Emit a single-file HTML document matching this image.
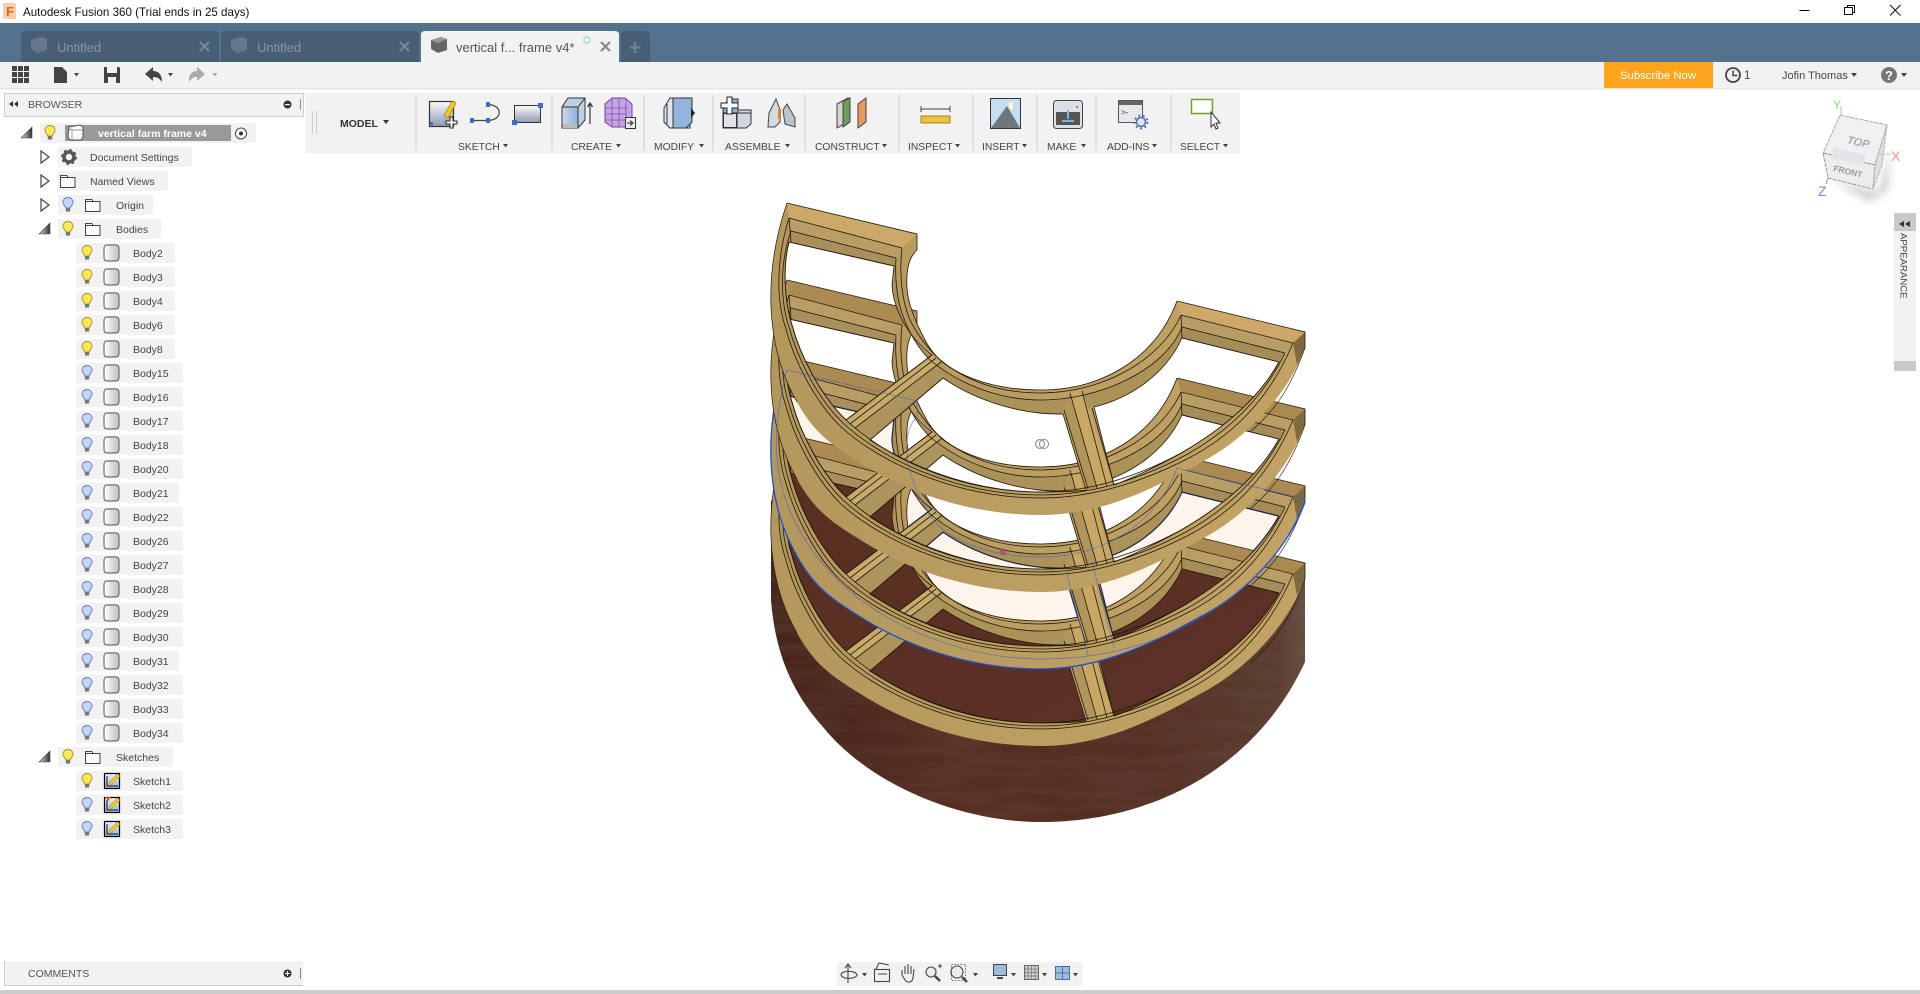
<!DOCTYPE html>
<html><head><meta charset="utf-8"><title>Autodesk Fusion 360</title>
<style>
html,body{margin:0;padding:0;width:1920px;height:994px;overflow:hidden;background:#fff}
svg{display:block;position:absolute;left:0;top:0}
text{font-family:"Liberation Sans",sans-serif;fill:#444;font-size:10.5px}
.tl{font-size:10.3px;fill:#444}
.t{font-size:10.5px;fill:#444}
.ln{fill:none;stroke:#20180a;stroke-width:.8}
</style></head><body>
<svg width="1920" height="994" viewBox="0 0 1920 994" xmlns="http://www.w3.org/2000/svg">
<defs>
<linearGradient id="wood" x1="0" x2="1" y1="0" y2="0"><stop offset="0" stop-color="#b4975c"/><stop offset=".5" stop-color="#bb9e62"/><stop offset="1" stop-color="#c2a364"/></linearGradient>
<linearGradient id="base" x1="0" x2="1" y1="0" y2="0"><stop offset="0" stop-color="#45251b"/><stop offset=".35" stop-color="#562d21"/><stop offset=".7" stop-color="#552e23"/><stop offset=".95" stop-color="#5b3e30"/><stop offset="1" stop-color="#6b5244"/></linearGradient>
<linearGradient id="brown" x1="0" x2="1" y1="0" y2="1"><stop offset="0" stop-color="#5a3023"/><stop offset="1" stop-color="#5a3124"/></linearGradient>
<linearGradient id="gs" x1="0" x2="0" y1="0" y2="1"><stop offset="0" stop-color="#fbfbfb"/><stop offset="1" stop-color="#8e9ab0"/></linearGradient>
<linearGradient id="gb" x1="0" x2="1" y1="0" y2="0"><stop offset="0" stop-color="#c9d9ea"/><stop offset="1" stop-color="#8fb0d6"/></linearGradient>
<linearGradient id="gi" x1="0" x2="1" y1="0" y2="0"><stop offset="0" stop-color="#fff"/><stop offset="1" stop-color="#bdbfc4"/></linearGradient>
<linearGradient id="gt" x1="0" x2="1" y1="0" y2="0"><stop offset="0" stop-color="#ddd"/><stop offset="1" stop-color="#333"/></linearGradient>
<linearGradient id="gsk" x1="0" x2="0" y1="0" y2="1"><stop offset="0" stop-color="#eaf2fa"/><stop offset="1" stop-color="#8fb8e2"/></linearGradient>
<filter id="bl"><feGaussianBlur stdDeviation="4"/></filter>
<filter id="grain" x="0" y="0" width="100%" height="100%"><feTurbulence type="fractalNoise" baseFrequency=".012 .09" numOctaves="3" seed="4"/><feColorMatrix values="0 0 0 0 .12  0 0 0 0 .06  0 0 0 0 .04  .9 0 0 0 -.28"/><feComposite in2="SourceGraphic" operator="in"/></filter>

<path id="wn" d="M789,242 L894,266 L892,285 C893,305 905,335 932,355 L846,420 C820,395 800,355 792,325 C784,300 783,265 789,242 Z M943,378 C975,400 1020,415 1063,414 L1086,490 C1070,492 1055,492 1041,492 C980,492 920,472 870,440 Z M1094,407 C1130,398 1165,375 1182,338 L1279,362 C1255,405 1215,433 1183,452 C1160,465 1135,477 1114,485 Z"/>
<path id="so" d="M1305,348 C1288,395 1245,440 1200,463 C1160,485 1105,515 1041,515 C975,515 910,495 859,462 C835,447 815,435 797,402 C764,345 764,270 787,203"/>
<path id="ia" d="M917,250 C908,258 906,272 907,288 C908,305 917,325 925,340 C928,345 930,350 941,361 C965,380 1000,390 1041,390 C1100,390 1155,360 1177,301"/>
<path id="ia2" d="M902,248 C900,265 900,290 907,312 C912,328 925,345 937,357 C965,382 1000,393 1041,393 C1100,393 1160,362 1181,315"/>
<path id="ia3" d="M896,258 C895,275 896,298 903,316 C910,335 920,350 930,360 C960,385 1000,400 1041,400 C1100,400 1165,370 1182,327"/>
<path id="si" d="M789,242 C783,265 784,300 792,325 C800,355 820,395 846,420 C880,452 950,492 1041,492 C1100,492 1150,470 1183,452 C1215,433 1255,405 1279,362"/>
<path id="si2" d="M791,231 C780,262 780,300 789,327 C797,357 817,398 843,423 C877,455 950,495 1041,495 C1100,495 1152,473 1186,455 C1220,436 1260,405 1285,353"/>
<path id="si3" d="M789,218 C776,260 776,300 786,329 C794,360 814,400 840,426 C874,458 950,498 1041,498 C1100,498 1154,476 1189,458 C1225,439 1266,407 1293,343"/>
<path id="ov" d="M787,203 L917,234 L917,250 C908,258 906,272 907,288 C908,305 917,325 925,340 C928,345 930,350 941,361 C965,380 1000,390 1041,390 C1100,390 1155,360 1177,301 L1305,332 C1285,390 1240,430 1190,457 C1150,478 1100,492 1041,492 C960,492 870,455 823,397 C775,340 766,280 787,203 Z"/>
<path id="rd" d="M787,203 L917,234 L902,248 L789,218 Z M1177,301 L1305,332 L1293,343 L1181,315 Z" fill="#6d5327" opacity=".35"/>

<g id="T">
<path fill="url(#wood)" fill-rule="evenodd" d="M787,203 L917,234 L917,250 C908,258 906,272 907,288 C908,305 917,325 925,340 C928,345 930,350 941,361 C965,380 1000,390 1041,390 C1100,390 1155,360 1177,301 L1305,332 L1305,348 C1288,395 1245,440 1200,463 C1160,485 1105,515 1041,515 C975,515 910,495 859,462 C835,447 815,435 797,402 C764,345 764,270 787,203 Z M789,242 L894,266 L892,285 C893,305 905,335 932,355 L846,420 C820,395 800,355 792,325 C784,300 783,265 789,242 Z M943,378 C975,400 1020,415 1063,414 L1086,490 C1070,492 1055,492 1041,492 C980,492 920,472 870,440 Z M1094,407 C1130,398 1165,375 1182,338 L1279,362 C1255,405 1215,433 1183,452 C1160,465 1135,477 1114,485 Z"/>
<path fill="#ab9259" d="M894,266 L892,285 C893,305 905,335 931,355 L943,378 C975,400 1020,415 1063,414 L1094,407 C1130,398 1165,375 1182,338 L1182,327 C1165,370 1100,400 1041,400 C1000,400 960,385 930,360 C920,350 910,335 903,316 C896,298 895,275 896,258 Z"/>
<path fill="#cca968" d="M787,203 L917,234 L902,248 L789,218 Z"/>
<path fill="#b89e65" d="M789,218 L902,248 L896,258 L791,231 Z"/>
<path fill="#a88f5b" d="M791,231 L896,258 L894,266 L789,242 Z"/>
<path fill="#cda868" d="M1177,301 L1305,332 L1293,343 L1181,315 Z"/>
<path fill="#b89e65" d="M1181,315 L1293,343 L1285,353 L1182,327 Z"/>
<path fill="#a58d5a" d="M1182,327 L1285,353 L1279,362 L1182,338 Z"/>
<path fill="#7f6a3f" d="M1305,332 L1305,348 L1297,365 L1293,343 Z"/>
<path fill="#c7ab6a" d="M932,355 L941,362 L855,428 L846,420 Z"/>
<path fill="#ad945c" d="M941,362 L943,378 L870,440 L855,428 Z"/>
<path fill="#c9a866" d="M1070,393 L1082,390 L1114,485 L1097,488 Z"/>
<path fill="#b0965d" d="M1064,410 L1070,393 L1097,488 L1088,489 Z"/>
<g class="ln">
<path d="M787,203 L917,234 L917,250 M1177,301 L1305,332 L1305,348"/>
<path d="M789,218 L902,248 M791,231 L896,258 M789,242 L894,266"/>
<path d="M1181,315 L1293,343 M1182,327 L1285,353 M1182,338 L1279,362"/>
<path d="M932,355 L846,420 M941,362 L855,428 M943,378 L870,440 M936,358 L850,424"/>
<path d="M1070,393 L1097,488 M1082,391 L1107,487 M1092,408 L1114,485 M1064,410 L1088,489"/>
<path d="M789,218 L791,242 M1181,315 L1182,338"/>
<use href="#wn"/>
<use href="#ia"/>
<use href="#ia2"/>
<use href="#ia3"/>
<use href="#si"/>
<use href="#si2"/>
<use href="#si3"/>
<path d="M787,203 C764,270 764,345 797,402" stroke-width=".7"/>
<path d="M1305,348 C1288,395 1270,415 1250,432" stroke-width=".6"/>
</g>
</g>

<g id="bY"><path d="M0,-7.5 C3.2,-7.5 5,-5.2 5,-2.8 C5,-.5 2.6,.8 2.3,3 L-2.3,3 C-2.6,.8 -5,-.5 -5,-2.8 C-5,-5.2 -3.2,-7.5 0,-7.5 Z" fill="#ffe94f" stroke="#a8983e"/><rect x="-2.2" y="3" width="4.4" height="3.6" rx="1" fill="#777"/></g>
<g id="bB"><path d="M0,-7.5 C3.2,-7.5 5,-5.2 5,-2.8 C5,-.5 2.6,.8 2.3,3 L-2.3,3 C-2.6,.8 -5,-.5 -5,-2.8 C-5,-5.2 -3.2,-7.5 0,-7.5 Z" fill="#c3d5f5" stroke="#6f86b4"/><rect x="-2.2" y="3" width="4.4" height="3.6" rx="1" fill="#777"/></g>
<path id="fd" d="M-7.5,-5.5 L-1,-5.5 L0,-3.5 L7,-3.5 L7,6.5 L-7.5,6.5 Z M-7.5,-3.5 L0,-3.5" fill="#fafafa" stroke="#444" stroke-width="1"/>
<path id="tO" d="M0,-6 L8,0 L0,6 Z" fill="#fff" stroke="#444" stroke-width="1.2"/>
<path id="tD" d="M11,-6 L0,5 L11,5 Z" fill="url(#gt)" stroke="#444" stroke-width=".6"/>
<g id="ri"><rect x="104" y="-8" width="15" height="16" rx="3" fill="url(#gi)" stroke="#555" stroke-width="1"/></g>
<g id="ry"><rect x="76" y="-10" width="99" height="20" fill="#f2f2f2"/><use href="#bY" x="87"/><use href="#ri"/></g>
<g id="rb"><rect x="76" y="-10" width="107" height="20" fill="#f2f2f2"/><use href="#bB" x="87"/><use href="#ri"/></g>
<g id="rc"><rect x="76" y="-10" width="103" height="20" fill="#f2f2f2"/><use href="#bB" x="87"/><use href="#ri"/></g>
<g id="sk"><rect x="104.500" y="-7.500" width="15" height="15" fill="url(#gsk)" stroke="#000" stroke-width="1.2"/><path d="M107,-5 V5 H118" fill="none" stroke="#111"/><path d="M109,2 L117,-7 L120,-5 L111,4 Z" fill="#f6c91c" stroke="#a57a10" stroke-width=".5"/></g>
</defs>

<!-- title bar -->
<rect width="1920" height="23" fill="#fff"/>
<rect x="3" y="3" width="13" height="16" rx="1" fill="#f7cfa8"/>
<text x="6" y="16" style="font-size:13px;font-weight:bold;fill:#d46a1e">F</text>
<text x="23" y="16" style="font-size:11.600px;fill:#111">Autodesk Fusion 360 (Trial ends in 25 days)</text>
<path d="M1799.500,10.500 H1809.500" stroke="#000" stroke-width="1"/>
<path d="M1844.500,7.500 H1852.500 V14.500 H1844.500 Z M1847.500,7.500 V5.500 H1854.500 V12.500 H1852.500" fill="none" stroke="#111"/>
<path d="M1890,5 L1900.500,15.500 M1900.500,5 L1890,15.500" stroke="#111" stroke-width="1"/>

<!-- tab bar -->
<rect y="23" width="1920" height="39" fill="#54718d"/>
<path d="M21,62 V35 Q21,31 25,31 H215 Q219,31 219,35 V62 Z" fill="#475e75"/>
<path d="M221,62 V35 Q221,31 225,31 H415 Q419,31 419,35 V62 Z" fill="#475e75"/>
<path d="M421,62 V35 Q421,31 425,31 H615 Q619,31 619,35 V62 Z" fill="#f2f2f2"/>
<path d="M621,62 V35 Q621,31 625,31 H646 Q650,31 650,35 V62 Z" fill="#475e75"/>
<g fill="#66788b"><path d="M31,40 L41,37 L47,39 V50 L38,53 L31,49 Z"/><path d="M231,40 L241,37 L247,39 V50 L238,53 L231,49 Z"/></g>
<path d="M431,40 L441,37 L447,39 V50 L438,53 L431,49 Z" fill="#666"/><path d="M431,40 L438,43 L447,39 L441,37 Z" fill="#999"/>
<text x="57" y="52" style="font-size:13px;fill:#8797a8">Untitled</text>
<text x="257" y="52" style="font-size:13px;fill:#8797a8">Untitled</text>
<text x="456" y="52" style="font-size:13px;fill:#555">vertical f... frame v4*</text>
<g stroke-width="2.200" fill="none"><path d="M200,42 L209,51 M209,42 L200,51 M400,42 L409,51 M409,42 L400,51" stroke="#7a8999"/><path d="M601,42 L610,51 M610,42 L601,51" stroke="#888"/><path d="M635,42 V53 M629.500,47.500 H640.500" stroke="#6f8296"/></g>
<circle cx="587" cy="40" r="3.200" fill="none" stroke="#7fd4c4" stroke-width="1"/>

<!-- quick access -->
<rect y="62" width="1920" height="26" fill="#f2f2f2"/>
<rect y="88" width="1920" height="1.500" fill="#e6e6e6"/>
<g fill="#444"><rect x="12" y="66" width="5" height="5"/><rect x="18" y="66" width="5" height="5"/><rect x="24" y="66" width="5" height="5"/><rect x="12" y="72" width="5" height="5"/><rect x="18" y="72" width="5" height="5"/><rect x="24" y="72" width="5" height="5"/><rect x="12" y="78" width="5" height="5"/><rect x="18" y="78" width="5" height="5"/><rect x="24" y="78" width="5" height="5"/>
<path d="M54,67 H62 L67,72 V83 H54 Z"/><path d="M74,73 H79 L76.500,76.500 Z"/>
<path d="M104,67 H119 L120,68 V83 H104 Z M107,67 V73 H117 V67 Z M108,77 V83 H116 V77 Z" fill-rule="evenodd"/>
<path d="M145,74 L153,67 V71 C158,71 162,74 162,82 C159,78 157,77 153,77 V81 Z"/><path d="M168,73 H173 L170.500,76.500 Z"/></g>
<g fill="#aaa"><path d="M205,74 L197,67 V71 C192,71 189,74 189,82 C192,78 193,77 197,77 V81 Z"/><path d="M212.500,73 H217.500 L215,76.500 Z"/></g>
<rect x="1604" y="62" width="109" height="26" fill="#fba41c"/>
<text x="1620" y="79" style="font-size:11.300px;fill:#fff">Subscribe Now</text>
<circle cx="1733" cy="75" r="7" fill="none" stroke="#444" stroke-width="1.800"/><path d="M1733,70.500 V75.500 H1737.500" fill="none" stroke="#444" stroke-width="1.500"/>
<text x="1744" y="79" style="font-size:11.500px;fill:#444">1</text>
<text x="1782" y="79" style="font-size:11px;fill:#444">Jofin Thomas</text>
<path d="M1851,73 H1857 L1854,77 Z M1901,73 H1907 L1904,77 Z" fill="#444"/>
<circle cx="1889" cy="75" r="8" fill="#777"/><text x="1885" y="80" style="font-size:13px;font-weight:bold;fill:#fff">?</text>

<!-- browser -->
<rect x="4.500" y="93.500" width="299" height="23" fill="#f2f2f2" stroke="#ccc"/>
<path d="M9,104 L13,101 V107 Z M14,104 L18,101 V107 Z" fill="#333"/>
<text x="28" y="108" style="font-size:10.500px;fill:#555">BROWSER</text>
<circle cx="287.500" cy="104.500" r="4" fill="#333"/><rect x="285" y="104" width="5" height="1.200" fill="#fff"/>
<rect x="300" y="99" width="1" height="11" fill="#888"/>

<rect x="40" y="123" width="216" height="20" fill="#f2f2f2"/>
<rect x="65" y="125" width="166" height="16" fill="#999"/>
<use href="#tD" x="21" y="133"/><use href="#bY" x="50" y="133"/>
<path d="M69,127 L80,125 L83,127 V137 L81,140 H70 L68,137 Z" fill="#fafafa" stroke="#555"/><path d="M68,128 L72,130 H83 M72,130 V140" fill="none" stroke="#777" stroke-width=".7"/>
<text x="98" y="137" style="font-size:10.500px;font-weight:bold;fill:#fff">vertical farm frame v4</text>
<circle cx="241" cy="133.500" r="5.500" fill="#fff" stroke="#444"/><circle cx="241" cy="133.500" r="2" fill="#333"/>

<rect x="58" y="147" width="134" height="20" fill="#f2f2f2"/><use href="#tO" x="41" y="157"/>
<circle cx="69" cy="157" r="5" fill="none" stroke="#555" stroke-width="3.500"/><circle cx="69" cy="157" r="7" fill="none" stroke="#555" stroke-width="2" stroke-dasharray="2.500 3"/>
<text x="90" y="161" class="t">Document Settings</text>
<rect x="58" y="171" width="110" height="20" fill="#f2f2f2"/><use href="#tO" x="41" y="181"/><use href="#fd" x="68" y="181"/>
<text x="90" y="185" class="t">Named Views</text>
<rect x="58" y="195" width="95" height="20" fill="#f2f2f2"/><use href="#tO" x="41" y="205"/><use href="#bB" x="68" y="205"/><use href="#fd" x="93" y="205"/>
<text x="116" y="209" class="t">Origin</text>
<rect x="58" y="219" width="103" height="20" fill="#f2f2f2"/><use href="#tD" x="39" y="229"/><use href="#bY" x="68" y="229"/><use href="#fd" x="93" y="229"/>
<text x="116" y="233" class="t">Bodies</text>

<use href="#ry" y="253"/><text x="133" y="257" class="t">Body2</text>
<use href="#ry" y="277"/><text x="133" y="281" class="t">Body3</text>
<use href="#ry" y="301"/><text x="133" y="305" class="t">Body4</text>
<use href="#ry" y="325"/><text x="133" y="329" class="t">Body6</text>
<use href="#ry" y="349"/><text x="133" y="353" class="t">Body8</text>
<use href="#rb" y="373"/><text x="133" y="377" class="t">Body15</text>
<use href="#rb" y="397"/><text x="133" y="401" class="t">Body16</text>
<use href="#rb" y="421"/><text x="133" y="425" class="t">Body17</text>
<use href="#rb" y="445"/><text x="133" y="449" class="t">Body18</text>
<use href="#rb" y="469"/><text x="133" y="473" class="t">Body20</text>
<use href="#rc" y="493"/><text x="133" y="497" class="t">Body21</text>
<use href="#rb" y="517"/><text x="133" y="521" class="t">Body22</text>
<use href="#rb" y="541"/><text x="133" y="545" class="t">Body26</text>
<use href="#rb" y="565"/><text x="133" y="569" class="t">Body27</text>
<use href="#rb" y="589"/><text x="133" y="593" class="t">Body28</text>
<use href="#rb" y="613"/><text x="133" y="617" class="t">Body29</text>
<use href="#rb" y="637"/><text x="133" y="641" class="t">Body30</text>
<use href="#rc" y="661"/><text x="133" y="665" class="t">Body31</text>
<use href="#rb" y="685"/><text x="133" y="689" class="t">Body32</text>
<use href="#rb" y="709"/><text x="133" y="713" class="t">Body33</text>
<use href="#rb" y="733"/><text x="133" y="737" class="t">Body34</text>

<rect x="58" y="747" width="115" height="20" fill="#f2f2f2"/><use href="#tD" x="39" y="757"/><use href="#bY" x="68" y="757"/><use href="#fd" x="93" y="757"/>
<text x="116" y="761" class="t">Sketches</text>
<rect x="76" y="771" width="107" height="20" fill="#f2f2f2"/><use href="#bY" x="87" y="781"/><use href="#sk" y="781"/><text x="133" y="785" class="t">Sketch1</text>
<rect x="76" y="795" width="107" height="20" fill="#f2f2f2"/><use href="#bB" x="87" y="805"/><use href="#sk" y="805"/><path d="M105,797 L111,797 L108,801 Z" fill="#e2521c"/><text x="133" y="809" class="t">Sketch2</text>
<rect x="76" y="819" width="107" height="20" fill="#f2f2f2"/><use href="#bB" x="87" y="829"/><use href="#sk" y="829"/><text x="133" y="833" class="t">Sketch3</text>

<!-- comments -->
<path d="M4.500,961 V985.500 H303" fill="none" stroke="#ccc"/><rect x="5" y="961" width="298" height="24" fill="#f2f2f2"/>
<text x="28" y="977" style="font-size:10.500px;fill:#555">COMMENTS</text>
<circle cx="287.500" cy="973.500" r="4" fill="#333"/><path d="M285,973.500 H290 M287.500,971 V976" stroke="#fff"/>
<rect x="300" y="968" width="1" height="11" fill="#888"/>
<rect y="990" width="1920" height="4" fill="#ccc"/>

<!-- toolbar -->
<rect x="305" y="93" width="935" height="60" fill="#f2f2f2"/>
<path d="M312.500,111 V134 M316.500,111 V134" stroke="#ccc"/>
<g stroke="#d4d4d4" stroke-width="1.200"><path d="M416,95 V151 M552,95 V151 M644,95 V151 M713,95 V151 M805,95 V151 M899,95 V151 M973,95 V151 M1037,95 V151 M1096,95 V151 M1171,95 V151"/></g>
<text x="340" y="127" style="font-size:10.500px;font-weight:bold;fill:#333">MODEL</text><path d="M383,120 H389 L386,124 Z" fill="#333"/>
<g class="tl">
<text x="458" y="150" class="tl">SKETCH</text><text x="571" y="150" class="tl">CREATE</text><text x="654" y="150" class="tl">MODIFY</text><text x="725" y="150" class="tl">ASSEMBLE</text><text x="815" y="150" class="tl">CONSTRUCT</text><text x="908" y="150" class="tl">INSPECT</text><text x="982" y="150" class="tl">INSERT</text><text x="1047" y="150" class="tl">MAKE</text><text x="1107" y="150" class="tl">ADD-INS</text><text x="1180" y="150" class="tl">SELECT</text>
</g>
<path d="M503,144 H508 L505.500,147.500 Z M616,144 H621 L618.500,147.500 Z M699,144 H704 L701.500,147.500 Z M785,144 H790 L787.500,147.500 Z M882,144 H887 L884.500,147.500 Z M955,144 H960 L957.500,147.500 Z M1022,144 H1027 L1024.500,147.500 Z M1081,144 H1086 L1083.500,147.500 Z M1152,144 H1157 L1154.500,147.500 Z M1223,144 H1228 L1225.500,147.500 Z" fill="#444"/>

<!-- sketch -->
<rect x="429.500" y="101.500" width="24" height="25" fill="url(#gs)" stroke="#333" stroke-width="1.200"/>
<path d="M444,116 L452,101 L456,103 L448,118 Z" fill="#f6c91c" stroke="#8a6a10" stroke-width=".6"/>
<path d="M446,121 H450 V117 H453 V121 H457 V124 H453 V128 H450 V124 H446 Z" fill="#fff" stroke="#222"/>
<rect x="430" y="122" width="3" height="3" fill="#3d6fc9"/>
<path d="M472,120.500 H488 M488,104.500 C503,105 503,120 488,120.500" fill="none" stroke="#444" stroke-width="1.200"/><g fill="#3d6fc9"><rect x="470" y="118" width="4" height="5"/><rect x="486" y="118" width="4" height="5"/><rect x="486" y="102" width="4" height="5"/></g>
<rect x="514.500" y="105.500" width="26" height="17" fill="url(#gs)" stroke="#333"/><g fill="#3d6fc9"><rect x="538" y="103" width="5" height="5"/><rect x="512" y="120" width="5" height="5"/></g>
<!-- extrude -->
<path d="M562,107 L568,98 H585 V120 L578,128 H562 Z" fill="#bcd0e6" stroke="#333"/><path d="M562,107 H578 V128 H562 Z" fill="url(#gb)" stroke="#333"/><path d="M578,107 L585,98" stroke="#333" fill="none"/><rect x="562.500" y="124" width="15" height="4" fill="#bbb"/>
<path d="M590,124 V104 M587.500,107 L590,103 L592.500,107" fill="none" stroke="#333" stroke-width="1.200"/>
<path d="M605,104 L612,98 H625 L632,104 V122 L626,127 H612 L605,122 Z" fill="#c7a2e6" stroke="#6a4a90"/><path d="M605,108 H627 M605,114 H627 M605,120 H627 M612,98 V127 M619,98 V127 M626,98 V127" stroke="#7a55a8" stroke-width=".8" fill="none"/>
<rect x="625.500" y="117.500" width="10" height="11" fill="#eee" stroke="#333"/><path d="M627,123 H632 M630,120.500 L633,123 L630,125.500" fill="none" stroke="#222"/>
<!-- modify -->
<path d="M664,108 L670,98 H690 L690,128 H670 L664,122 Z" fill="#e0e6ee" stroke="#333"/><path d="M673,98 H692 V122 L686,128 H673 Z" fill="#93b4dc" stroke="#333"/><path d="M667,104 V124 M673,98 V128" stroke="#333" fill="none"/><path d="M691,108 L695,113 L691,118 Z" fill="#222"/>
<!-- assemble -->
<path d="M723,113 L727,110 H751 V124 L746,128 H723 Z" fill="#cfd6de" stroke="#333"/><path d="M737,113 H751 M737,113 V128" stroke="#333" fill="none"/><rect x="723.500" y="113.500" width="13" height="14" fill="#dfe3e8" stroke="#333"/><path d="M728,99 L738,99 V113 H723 V110 Z" fill="#8db0da" stroke="#333"/>
<path d="M727,97 H732 V103 H738 V108 H732 V114 H727 V108 H721 V103 H727 Z" fill="#fff" stroke="#222"/>
<path d="M768,127 L769,113 L776,99 L780,110 V122 L775,127 Z" fill="#d6dbe2" stroke="#444"/><path d="M783,110 L787,104 L795,118 V127 L785,124 Z" fill="#b9c4d0" stroke="#444"/><rect x="778" y="109" width="3" height="10" fill="#e08030"/>
<!-- construct -->
<path d="M837,104 L848,98 V122 L837,128 Z" fill="#d5d5d5" stroke="#444"/><path d="M843,101 L850,98 V122 L843,127 Z" fill="#6f9c58" stroke="#444"/><path d="M858,104 L866,98 V122 L858,128 Z" fill="#e89a5c" stroke="#444"/>
<!-- inspect -->
<path d="M921,106 V112 M950,106 V112 M921,109 H950" stroke="#444" fill="none"/><rect x="921" y="116" width="29" height="7" fill="#f1c33d" stroke="#8a6a10" stroke-width=".8"/>
<!-- insert -->
<rect x="990.500" y="98.500" width="30" height="30" fill="#c6def2" stroke="#333"/><path d="M991,128 L1007,106 L1020,128 Z" fill="#70767e"/><rect x="1009" y="102" width="4" height="7" fill="#fff7d0"/>
<!-- make -->
<rect x="1053.500" y="100.500" width="29" height="28" rx="3" fill="#dcdfe3" stroke="#444"/><rect x="1056" y="112" width="24" height="13" fill="#555"/><path d="M1068,110 V119 M1062,121 H1074" stroke="#7db4e0" stroke-width="2" fill="none"/><rect x="1076" y="106" width="2" height="2" fill="#3cb043"/>
<!-- add-ins -->
<rect x="1118.500" y="100.500" width="24" height="22" fill="#e8e8ea" stroke="#555"/><rect x="1119" y="101" width="23" height="4" fill="#666"/><text x="1121" y="115" style="font-size:8px;fill:#333">&gt;-</text>
<circle cx="1141" cy="122" r="4.500" fill="#dbe6f4" stroke="#4a6fa8" stroke-width="1.500"/><circle cx="1141" cy="122" r="6.500" fill="none" stroke="#4a6fa8" stroke-width="1.800" stroke-dasharray="2 2.600"/>
<!-- select -->
<rect x="1191.500" y="99.500" width="21" height="14" fill="#fff" stroke="#6fa31f" stroke-width="1.500"/>
<path d="M1211,112 L1211,127 L1214,124 L1216,129 L1218,128 L1216,123 L1220,123 Z" fill="#fff" stroke="#333"/>

<!-- model -->
<path d="M786,520 L785,556 L840,660 L1041,735 L1230,660 L1305,563 L1305,662 C1255,770 1150,822 1041,822 C960,822 870,785 823,727 C790,690 775,650 771,600 L771,500 Z" fill="url(#base)"/>
<path d="M786,520 L785,556 L840,660 L1041,735 L1230,660 L1305,563 L1305,662 C1255,770 1150,822 1041,822 C960,822 870,785 823,727 C790,690 775,650 771,600 L771,500 Z" fill="#000" filter="url(#grain)"/>
<use href="#wn" y="154" fill="#fdf5ec" stroke="#1d4fd7" stroke-width="1.600"/>
<use href="#wn" y="231" fill="url(#brown)"/>
<use href="#T" y="231"/><use href="#rd" y="231"/>
<use href="#T" y="154"/><use href="#rd" y="154"/>
<use href="#so" y="154" fill="none" stroke="#1d4fd7" stroke-width="1.300"/>
<use href="#T" y="77"/><use href="#rd" y="77"/>
<use href="#T"/>
<use href="#ov" y="167" fill="none" stroke="#3a62cc" stroke-width=".7" opacity=".75"/>
<path d="M1066,570 L1088,655 M1092,562 L1114,648" fill="none" stroke="#3a62cc" stroke-width=".7" opacity=".75"/>
<circle cx="1003" cy="552" r="3.500" fill="#b0406e" opacity=".65"/>
<circle cx="1040" cy="444" r="4.500" fill="#eee" fill-opacity=".7" stroke="#888"/><circle cx="1044" cy="444" r="4.500" fill="none" stroke="#888"/>

<!-- nav cube -->
<path d="M1830,180 L1878,192 L1890,150 L1888,190 L1870,202 Z" fill="#999" opacity=".45" filter="url(#bl)"/>
<path d="M1840,115 L1887,125 L1875,165 L1823,153 Z" fill="#f0f0f2" stroke="#aaa" stroke-dasharray="4 1"/>
<path d="M1823,153 L1875,165 L1873,189 L1828,178 Z" fill="#ededf0" stroke="#999" stroke-dasharray="4 1"/>
<path d="M1887,125 L1875,165 L1873,189 L1882,165 Z" fill="#e0e0e3" stroke="#aaa" stroke-dasharray="3 1"/>
<path d="M1834,148 L1866,155 L1863,166 L1832,158 Z" fill="#e2e4ea"/>
<text transform="translate(1846,143) rotate(13) skewX(-12)" style="font-size:11px;font-weight:bold;fill:#aaa">TOP</text>
<text transform="translate(1833,171) rotate(13)" style="font-size:8.500px;font-weight:bold;fill:#999">FRONT</text>
<text x="1833" y="109" style="font-size:12px;fill:#7fe07f">Y</text>
<text x="1891" y="161" style="font-size:14px;fill:#ff8f8f">X</text>
<text x="1818" y="196" style="font-size:14px;fill:#8080ff">Z</text>
<path d="M1841,106 L1841,115" stroke="#7fe07f"/><path d="M1880,154 L1891,154" stroke="#ffb0b0"/><path d="M1828,178 L1826,184" stroke="#8080ff"/>

<!-- appearance -->
<rect x="1894" y="213" width="22" height="158" fill="#f2f2f2"/>
<rect x="1894" y="213" width="22" height="18" fill="#c9c9c9"/>
<rect x="1894" y="361" width="22" height="10" fill="#c9c9c9"/>
<path d="M1899,224 L1904,221 V227 Z M1905,224 L1910,221 V227 Z" fill="#333"/>
<text transform="translate(1900.500,233) rotate(90)" style="font-size:9.600px;fill:#444">APPEARANCE</text>

<!-- nav bar -->
<rect x="837" y="962" width="245" height="24" fill="#f2f2f2"/>
<g fill="none" stroke="#444" stroke-width="1.100">
<path d="M841,975 C841,970 856,970 857,975 C856,979 843,980 841,975 Z M848,965 V983 M845,968 L848,964 L851,968"/>
<rect x="874.500" y="969.500" width="15" height="12"/><path d="M876,969 L879,963 L889,965 M878,974 H887"/>
<path d="M902,975 L905,980 C907,983 912,983 913,978 L914,969 M911,974 V966 M908,974 V964 M905,974 V966 M902,975 V970"/>
<circle cx="931" cy="972" r="5" fill="#e6eef5"/><path d="M935,976 L940,981" stroke-width="2.500"/><path d="M938,966 H942 M940,964 V968"/>
<circle cx="957" cy="972" r="6" fill="#e6eef5"/><path d="M962,977 L967,982" stroke-width="2.500"/><rect x="951.500" y="964.500" width="14" height="16" stroke-dasharray="1.500 1.500" stroke-width=".8"/>
</g>
<rect x="993.500" y="964.500" width="13" height="11" fill="#9dbce0" stroke="#444"/><path d="M997,978 H1003" stroke="#444" stroke-width="2"/>
<rect x="1024.500" y="965.500" width="14" height="14" fill="#ccc" stroke="#666"/><path d="M1028,966 V979 M1031.500,966 V979 M1035,966 V979 M1025,969 H1038 M1025,972.500 H1038 M1025,976 H1038" stroke="#777" stroke-width=".7"/>
<rect x="1055.500" y="966.500" width="14" height="13" fill="#9dbce0" stroke="#4a6fa8"/><path d="M1062.500,966 V980 M1055,973 H1070" stroke="#4a6fa8"/>
<path d="M862,973 H867 L864.500,976.500 Z M973,973 H978 L975.500,976.500 Z M1011,973 H1016 L1013.500,976.500 Z M1042,973 H1047 L1044.500,976.500 Z M1073,973 H1078 L1075.500,976.500 Z" fill="#444"/>
</svg>
</body></html>
